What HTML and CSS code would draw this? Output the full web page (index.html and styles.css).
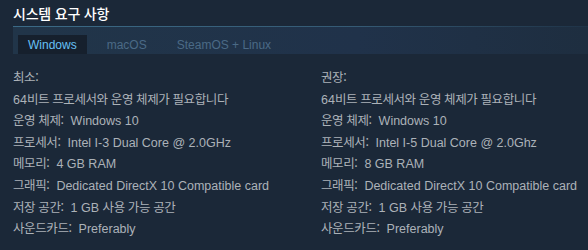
FILE: index.html
```html
<!DOCTYPE html>
<html lang="ko">
<head>
<meta charset="utf-8">
<link rel="stylesheet" href="styles.css">
</head>
<body>
<div class="sysreq">
  <h2 class="title">시스템 요구 사항</h2>
  <div class="tabs">
    <span class="tab active">Windows</span>
    <span class="tab">macOS</span>
    <span class="tab">SteamOS + Linux</span>
  </div>
  <div class="cols">
    <ul class="col">
      <li><span class="lbl ko">최소:</span></li>
      <li>64<span class="ko">비트 프로세서와 운영 체제가 필요합니다</span></li>
      <li><span class="lbl ko">운영 체제:</span><span class="val">Windows 10</span></li>
      <li><span class="lbl ko">프로세서:</span><span class="val">Intel I-3 Dual Core @ 2.0GHz</span></li>
      <li><span class="lbl ko">메모리:</span><span class="val">4 GB RAM</span></li>
      <li><span class="lbl ko">그래픽:</span><span class="val">Dedicated DirectX 10 Compatible card</span></li>
      <li><span class="lbl ko">저장 공간:</span><span class="val">1 GB <span class="ko">사용 가능 공간</span></span></li>
      <li><span class="lbl ko">사운드카드:</span><span class="val">Preferably</span></li>
    </ul>
    <ul class="col">
      <li><span class="lbl ko">권장:</span></li>
      <li>64<span class="ko">비트 프로세서와 운영 체제가 필요합니다</span></li>
      <li><span class="lbl ko">운영 체제:</span><span class="val">Windows 10</span></li>
      <li><span class="lbl ko">프로세서:</span><span class="val">Intel I-5 Dual Core @ 2.0Ghz</span></li>
      <li><span class="lbl ko">메모리:</span><span class="val">8 GB RAM</span></li>
      <li><span class="lbl ko">그래픽:</span><span class="val">Dedicated DirectX 10 Compatible card</span></li>
      <li><span class="lbl ko">저장 공간:</span><span class="val">1 GB <span class="ko">사용 가능 공간</span></span></li>
      <li><span class="lbl ko">사운드카드:</span><span class="val">Preferably</span></li>
    </ul>
  </div>
</div>
</body>
</html>
```

FILE: styles.css
```css
* { box-sizing: border-box; }
html, body {
  margin: 0;
  padding: 0;
  background: #1b2838;
  height: 100%;
}
body {
  font-family: "Liberation Sans", Arial, "Noto Sans CJK KR", sans-serif;
  color: #acb2b8;
  overflow: hidden;
}
.sysreq {
  padding-left: 13px;
}
.title {
  margin: 0;
  height: 27px;
  padding-top: 5px;
  font-family: "Noto Sans CJK KR", sans-serif;
  font-size: 14px;
  font-weight: 500;
  color: #ffffff;
  line-height: 17px;
  letter-spacing: -0.2px;
  border-bottom: 1px solid;
  border-image: linear-gradient(to right, #3b6a86 0%, #355a74 60%, #1f3347 100%) 1;
}
.tabs {
  display: flex;
  gap: 10px;
  height: 27px;
  padding: 8px 0 0 5px;
  background: linear-gradient(to right, #213549 0%, #20324a 60%, #1e2e40 100%);
}
.tab {
  display: block;
  height: 19px;
  padding: 0 10px;
  font-size: 12px;
  line-height: 20px;
  color: #4b6a86;
}
.tab.active {
  background: #16202d;
  color: #67c1f5;
}
.cols {
  display: grid;
  grid-template-columns: 308px 1fr;
  margin-top: 14px;
}
.col {
  list-style: none;
  margin: 0;
  padding: 0;
  font-size: 12.5px;
  white-space: nowrap;
}
.col li {
  height: 21.6px;
  line-height: 21.6px;
}
.ko {
  font-family: "Noto Sans CJK KR", sans-serif;
  font-size: 12.5px;
  line-height: 1;
  letter-spacing: -0.4px;
}
.val {
  margin-left: 7px;
}
```
